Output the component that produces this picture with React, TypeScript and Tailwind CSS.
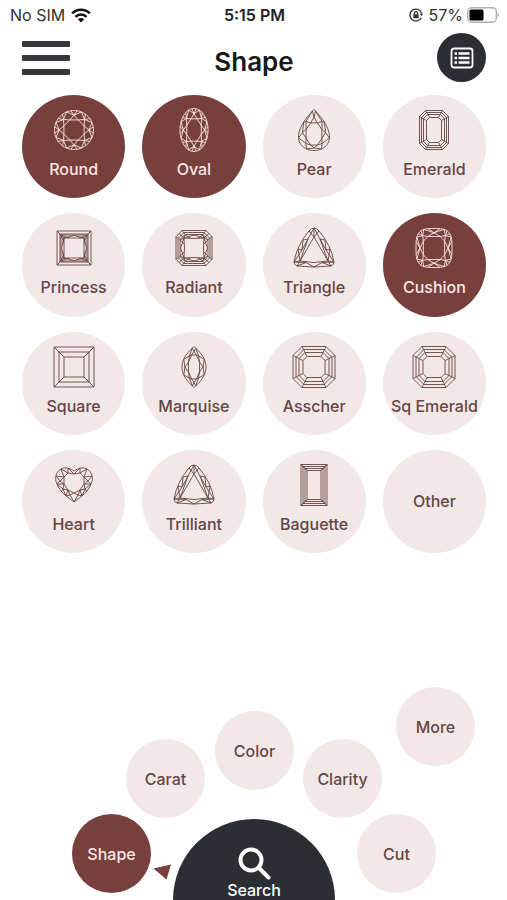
import { useState } from "react";
import type { ReactNode } from "react";

type Point = [number, number];
type Contour = (angle: number) => Point;

const TAU = Math.PI * 2;

const line = (points: Point[], close = false) =>
  "M" + points.map(([x, y]) => `${x.toFixed(2)} ${y.toFixed(2)}`).join("L") + (close ? "Z" : "");

const scaled = (contour: Contour, k: number): Contour => (a) => {
  const [x, y] = contour(a);
  return [x * k, y * k];
};

/* Brilliant cut: rim, table, star facets and girdle facets around any contour. */
function brilliant(contour: Contour, table: Contour, star: Contour, girdle = true) {
  const n = 8;
  const step = TAU / n;
  const rim = Array.from({ length: 72 }, (_, i) => contour((i / 72) * TAU));
  const tablePoints: Point[] = [];
  let d = line(rim, true);
  for (let k = 0; k < n; k++) {
    const a = k * step;
    const s = star(a);
    tablePoints.push(table(a + step / 2));
    d += line([table(a - step / 2), s, table(a + step / 2)]);
    d += line([contour(a - step / 2), s, contour(a + step / 2)]);
    if (girdle) d += line([contour(a - step / 5), s, contour(a + step / 5)]);
  }
  return d + line(tablePoints, true);
}

/* Step cut: nested rectangles with clipped corners, joined at the corners. */
function stepCut(w: number, h: number, rings: [number, number][]) {
  const corners = rings.map(([inset, cut]): Point[] => {
    const x = w / 2 - inset;
    const y = h / 2 - inset;
    return [
      [-x + cut, -y], [x - cut, -y], [x, -y + cut], [x, y - cut],
      [x - cut, y], [-x + cut, y], [-x, y - cut], [-x, -y + cut],
    ];
  });
  const last = corners[corners.length - 1];
  return (
    corners.map((ring) => line(ring, true)).join("") +
    corners[0].map((p, i) => line([p, last[i]])).join("")
  );
}

const ellipse = (rx: number, ry: number, cy = 0): Contour => (a) => [rx * Math.sin(a), cy - ry * Math.cos(a)];

const pear: Contour = (a) => [(15.5 / 0.77) * Math.sin(a) * Math.abs(Math.sin(a / 2)), -20.5 * Math.cos(a)];

const marquise: Contour = (a) => [12 * Math.sin(a) * Math.abs(Math.sin(a)), -20.5 * Math.cos(a)];

const cushion: Contour = (a) => {
  const s = Math.sin(a);
  const c = Math.cos(a);
  return [18 * Math.sign(s) * Math.abs(s) ** 0.6, -19.5 * Math.sign(c) * Math.abs(c) ** 0.6];
};

const round = ellipse(19.5, 19.5);
const oval = ellipse(14, 21.5);

const asscher = stepCut(42, 41, [[0, 9], [3, 8], [6, 6], [10, 4]]);

const trilliant =
  "M0 -20Q3 -20 5 -17Q17 -3 20 14Q20 17 17 18Q0 20 -17 18Q-20 17 -20 14Q-17 -3 -5 -17Q-3 -20 0 -20Z" +
  "M0 -11L14 13Q0 16 -14 13Z" +
  "M0 -20L0 -11M-5 -17L0 -11L5 -17M0 -20L-6 -9L-14 13M0 -20L6 -9L14 13" +
  "M-6 -9L-11 -8L-12 2L-16 1L-14 13M6 -9L11 -8L12 2L16 1L14 13" +
  "M-12 2L-20 14L-14 13L-17 18M12 2L20 14L14 13L17 18" +
  "M-17 18L-8 14.500L0 19L8 14.500L17 18M-20 14L-8 14.500M20 14L8 14.500M-12 2L-6 -9M12 2L6 -9";

const heart =
  "M0 -14C-4 -17 -9 -18 -13 -16C-18 -13 -20 -7 -17 -1C-14 7 -8 11 0 17C8 11 14 7 17 -1C20 -7 18 -13 13 -16C9 -18 4 -17 0 -14Z" +
  "M0 -11L-6 -12L-10 -8L-10 -1L-6 5L0 8L6 5L10 -1L10 -8L6 -12Z" +
  "M-6 -17L0 -11L6 -17M-13 -16L-6 -12L-6 -17M13 -16L6 -12L6 -17M-13 -16L-10 -8L-18 -9M13 -16L10 -8L18 -9" +
  "M-10 -8L-14 -4L-10 -1L-17 -1M10 -8L14 -4L10 -1L17 -1M-18 -9L-14 -4L-17 -1M18 -9L14 -4L17 -1" +
  "M-10 -1L-11 4L-6 5L-8 11M10 -1L11 4L6 5L8 11M-17 -1L-11 4L-13 7M17 -1L11 4L13 7" +
  "M-11 4L-8 11L-4 10L0 17L4 10L8 11L11 4M-6 5L-4 10L0 8L4 10L6 5";

const princess =
  stepCut(34, 34, [[0, 0], [3, 0], [4, 0]]) +
  "M-10 -10L10 -10L10 10L-10 10Z" +
  "M-13 -13L-10 -10L0 -12.500L10 -10L13 -13M13 13L10 10L0 12.500L-10 10L-13 13" +
  "M-10 -10L-12.500 0L-10 10M10 -10L12.500 0L10 10" +
  "M-13 -13L-5 -10M-13 -13L-10 -5M13 -13L5 -10M13 -13L10 -5M13 13L5 10M13 13L10 5M-13 13L-5 10M-13 13L-10 5";

const radiant =
  stepCut(36, 35, [[0, 6], [2, 6], [4, 5]]) +
  "M-10 -10Q0 -9 10 -10Q9 0 10 10Q0 9 -10 10Q-9 0 -10 -10Z" +
  "M-10 -10L0 -13L10 -10L13.500 0L10 10L0 13L-10 10L-13.500 0Z" +
  "M-9 -13L-10 -10L-14 -8M9 -13L10 -10L14 -8M9 13L10 10L14 8M-9 13L-10 10L-14 8" +
  "M-9 -13L-4 -10M9 -13L4 -10M-9 13L-4 10M9 13L4 10M-14 -8L-10 -4M14 -8L10 -4M-14 8L-10 4M14 8L10 4" +
  "M-15 -14.500L-10 -10M15 -14.500L10 -10M15 14.500L10 10M-15 14.500L-10 10";

const shapes: { name: string; art?: string }[] = [
  { name: "Round", art: brilliant(round, scaled(round, 0.56), scaled(round, 0.76)) },
  { name: "Oval", art: brilliant(oval, scaled(oval, 0.56), scaled(oval, 0.76)) },
  { name: "Pear", art: brilliant(pear, ellipse(8.5, 12, 4), ellipse(11.5, 15.5, 2.5), false) },
  { name: "Emerald", art: stepCut(29, 39, [[0, 6], [2, 5], [4, 4], [7, 3]]) },
  { name: "Princess", art: princess },
  { name: "Radiant", art: radiant },
  { name: "Triangle", art: trilliant },
  { name: "Cushion", art: brilliant(cushion, scaled(cushion, 0.62), scaled(cushion, 0.78)) },
  { name: "Square", art: stepCut(40, 40, [[0, 0], [5, 0], [10, 0]]) },
  { name: "Marquise", art: brilliant(marquise, ellipse(6, 13), scaled(marquise, 0.76), false) },
  { name: "Asscher", art: asscher },
  { name: "Sq Emerald", art: asscher },
  { name: "Heart", art: heart },
  { name: "Trilliant", art: trilliant },
  { name: "Baguette", art: stepCut(26, 41, [[0, 0], [2, 0], [4, 0], [6, 0]]) },
  { name: "Other" },
];

const filters = [
  { name: "Shape", place: "left-[43px] top-[134px]" },
  { name: "Carat", place: "left-[97px] top-[59px]" },
  { name: "Color", place: "left-[186px] top-[31px]" },
  { name: "Clarity", place: "left-[274px] top-[59px]" },
  { name: "Cut", place: "left-[328px] top-[134px]" },
  { name: "More", place: "left-[367px] top-[7px]" },
];

const tone = (on: boolean) => (on ? "bg-[#78403c] text-[#f8e6e3]" : "bg-[#f2e8e7] text-[#664544]");

function ShapeButton({ name, art, on, onClick }: { name: string; art?: string; on: boolean; onClick: () => void }) {
  return (
    <button
      type="button"
      aria-pressed={on}
      onClick={onClick}
      className={`flex aspect-square flex-col items-center rounded-full whitespace-nowrap ${
        art ? "gap-[5px] pt-[13px]" : "justify-center"
      } ${tone(on)}`}
    >
      {art && (
        <svg viewBox="-22 -22 44 44" className="size-11 shrink-0" fill="none" stroke="currentColor" strokeWidth="0.9" strokeLinejoin="round" aria-hidden="true">
          <path d={art} />
        </svg>
      )}
      <span className="text-base leading-6 font-medium">{name}</span>
    </button>
  );
}

function StatusBar() {
  return (
    <div className="grid h-[30px] grid-cols-[1fr_auto_1fr] items-center pr-2 pl-[10px] text-base leading-5 text-[#333]">
      <div className="flex items-center gap-[6px]">
        <span>No SIM</span>
        <svg viewBox="0 0 20 15" className="h-[15px] w-5" fill="none" stroke="#111" strokeWidth="2.6" aria-label="Wi-Fi">
          <path d="M1.200 5.400A12.500 12.500 0 0 1 18.800 5.400M4.500 8.800A7.800 7.800 0 0 1 15.500 8.800" />
          <path d="M10 14.500L6.800 11.300A4.500 4.500 0 0 1 13.200 11.300Z" fill="#111" stroke="none" />
        </svg>
      </div>
      <span className="font-semibold text-[#222]">5:15 PM</span>
      <div className="flex items-center justify-end gap-1">
        <svg viewBox="0 0 14 14" className="mr-[2px] size-[14px]" fill="none" stroke="#333" strokeWidth="1.3" aria-label="Rotation lock">
          <path d="M12.600 5A6 6 0 1 0 12.300 9.800" />
          <path d="M10.800 5.500H14.200L12.600 8.200Z" fill="#333" stroke="none" />
          <rect x="4.300" y="6.200" width="5.400" height="4" rx="0.600" fill="#333" stroke="none" />
          <path d="M5.400 6.500V5.200A1.600 1.600 0 0 1 8.600 5.200V6.500" />
        </svg>
        <span>57%</span>
        <svg viewBox="0 0 32 16" className="h-4 w-8" aria-label="Battery">
          <rect x="0.700" y="0.700" width="28.600" height="14.600" rx="4" fill="none" stroke="#b0b0b0" strokeWidth="1.400" />
          <rect x="2.500" y="2.500" width="14" height="11" rx="1.500" fill="#000" />
          <path d="M30.500 5.500Q32 6.500 32 8T30.500 10.500Z" fill="#b0b0b0" />
        </svg>
      </div>
    </div>
  );
}

function RoundLabel({ children }: { children: ReactNode }) {
  return <span className="text-base leading-5 font-medium">{children}</span>;
}

export default function App() {
  const [picked, setPicked] = useState<string[]>(["Round", "Oval", "Cushion"]);
  const [filter, setFilter] = useState("Shape");

  const toggle = (name: string) =>
    setPicked((now) => (now.includes(name) ? now.filter((item) => item !== name) : [...now, name]));

  return (
    <div className="flex min-h-screen flex-col overflow-hidden bg-[#fefefe] font-['Inter','Liberation_Sans',sans-serif]">
      <StatusBar />
      <header className="grid h-[55px] grid-cols-[1fr_auto_1fr] items-center pr-[21px] pl-[22px]">
        <button type="button" aria-label="Menu" className="flex w-12 flex-col gap-2">
          <span className="h-[6px] rounded-[1px] bg-[#38363b]" />
          <span className="h-[6px] rounded-[1px] bg-[#38363b]" />
          <span className="h-[6px] rounded-[1px] bg-[#38363b]" />
        </button>
        <h1 className="pt-2 text-[26px] leading-8 font-semibold text-[#17181b]">Shape</h1>
        <button type="button" aria-label="Results list" className="flex size-[49px] items-center justify-center justify-self-end rounded-full bg-[#2b2e32]">
          <svg viewBox="0 0 24 22" className="h-[22px] w-6" fill="none" stroke="#fff" aria-hidden="true">
            <rect x="1.500" y="1.500" width="21" height="19" rx="2.500" strokeWidth="1.800" />
            <path d="M4.500 6.500H7M4.500 11H7M4.500 15.500H7M8.500 6.500H19.500M8.500 11H19.500M8.500 15.500H19.500" strokeWidth="2.400" />
          </svg>
        </button>
      </header>

      <main className="grid grid-cols-4 gap-x-[17px] gap-y-[15px] pt-[10px] pr-[21px] pb-6 pl-[22px]">
        {shapes.map((shape) => (
          <ShapeButton key={shape.name} {...shape} on={picked.includes(shape.name)} onClick={() => toggle(shape.name)} />
        ))}
      </main>

      <nav aria-label="Filters" className="relative mx-auto mt-auto h-[220px] w-[449px] shrink-0 overflow-hidden">
        {filters.map(({ name, place }) => (
          <button
            key={name}
            type="button"
            aria-pressed={filter === name}
            onClick={() => setFilter(name)}
            className={`absolute flex size-[79px] items-center justify-center rounded-full ${place} ${tone(filter === name)}`}
          >
            <RoundLabel>{name}</RoundLabel>
          </button>
        ))}
        <svg viewBox="0 0 18 16" className="absolute top-[184px] left-[124px] h-4 w-[18px]" fill="#78403c" aria-hidden="true">
          <path d="M0.500 4.500L18 0.500L13.500 15.500Z" />
        </svg>
        <button type="button" className="absolute top-[139px] left-36 flex size-[162px] flex-col items-center rounded-full bg-[#2b2e32] pt-7 text-white">
          <svg viewBox="0 0 33 33" className="size-[33px]" fill="none" stroke="currentColor" strokeWidth="4" strokeLinecap="round" aria-hidden="true">
            <circle cx="13" cy="13" r="10.500" />
            <path d="M21 21L30.500 30.500" />
          </svg>
          <RoundLabel>Search</RoundLabel>
        </button>
      </nav>
    </div>
  );
}
